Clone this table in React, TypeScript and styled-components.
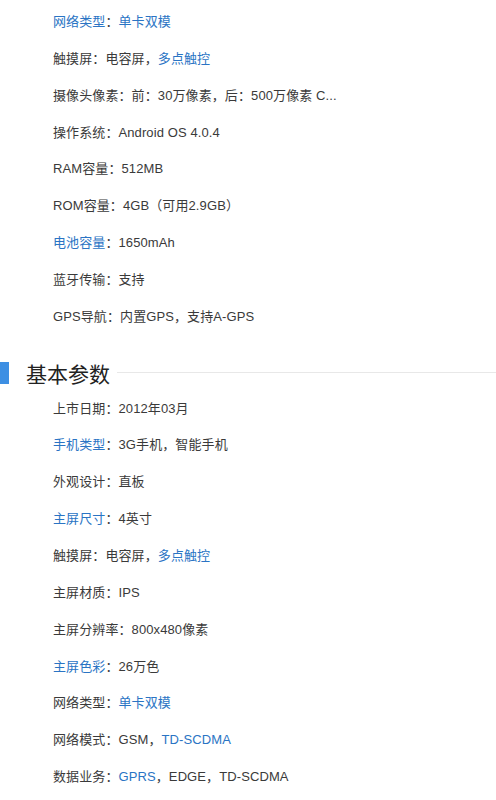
import React from "react";
import styled, { createGlobalStyle } from "styled-components";

const Global = createGlobalStyle`
  html, body { margin: 0; padding: 0; background: #fff; }
  body { font-family: Arial, "Liberation Sans", "Noto Sans CJK SC", sans-serif; }
`;

const Page = styled.div`
  padding-top: 4px;
  width: 496px;
`;

const List = styled.ul`
  list-style: none;
  margin: 0;
  padding: 0 0 0 53px;
`;

const Row = styled.li`
  height: 36.85px;
  line-height: 36.85px;
  font-size: 13px;
  color: #3a3a3a;
  white-space: nowrap;
  letter-spacing: 0.1px;
`;

const Link = styled.span`
  color: #2a74c4;
`;

const Heading = styled.div`
  display: flex;
  align-items: center;
  height: 22px;
  margin: 26px 0 7px;
`;

const Bar = styled.span`
  width: 9px;
  height: 22px;
  background: #3d8fe3;
  flex: none;
`;

const Title = styled.h2`
  margin: 0 7px 0 17px;
  font-size: 21px;
  font-weight: normal;
  color: #222;
  line-height: 22px;
  font-family: "Noto Sans CJK SC", sans-serif;
`;

const Rule = styled.span`
  flex: 1;
  height: 1px;
  background: #e8e8e8;
`;

type Part = string | { l: string };
const L = (l: string) => ({ l });

const group1: Part[][] = [
  [L("网络类型"), "：", L("单卡双模")],
  ["触摸屏：电容屏，", L("多点触控")],
  ["摄像头像素：前：30万像素，后：500万像素 C..."],
  ["操作系统：Android OS 4.0.4"],
  ["RAM容量：512MB"],
  ["ROM容量：4GB（可用2.9GB）"],
  [L("电池容量"), "：1650mAh"],
  ["蓝牙传输：支持"],
  ["GPS导航：内置GPS，支持A-GPS"],
];

const group2: Part[][] = [
  ["上市日期：2012年03月"],
  [L("手机类型"), "：3G手机，智能手机"],
  ["外观设计：直板"],
  [L("主屏尺寸"), "：4英寸"],
  ["触摸屏：电容屏，", L("多点触控")],
  ["主屏材质：IPS"],
  ["主屏分辨率：800x480像素"],
  [L("主屏色彩"), "：26万色"],
  ["网络类型：", L("单卡双模")],
  ["网络模式：GSM，", L("TD-SCDMA")],
  ["数据业务：", L("GPRS"), "，EDGE，TD-SCDMA"],
];

const renderRows = (rows: Part[][]) =>
  rows.map((parts, i) => (
    <Row key={i}>
      {parts.map((p, j) =>
        typeof p === "string" ? <React.Fragment key={j}>{p}</React.Fragment> : <Link key={j}>{p.l}</Link>
      )}
    </Row>
  ));

export default function App() {
  return (
    <Page>
      <Global />
      <List>{renderRows(group1)}</List>
      <Heading>
        <Bar />
        <Title>基本参数</Title>
        <Rule />
      </Heading>
      <List>{renderRows(group2)}</List>
    </Page>
  );
}
